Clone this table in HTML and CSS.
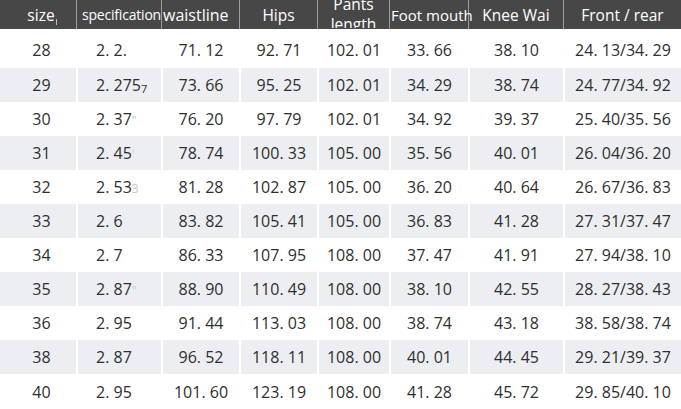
FILE: index.html
```html
<!DOCTYPE html>
<html lang="en">
<head>
<meta charset="utf-8">
<title>Size chart</title>
<link rel="stylesheet" href="styles.css">
</head>
<body>
<table class="chart">
  <colgroup>
    <col class="c-size"><col class="c-spec"><col class="c-waist"><col class="c-hips">
    <col class="c-pants"><col class="c-foot"><col class="c-knee"><col class="c-front">
  </colgroup>
  <thead>
    <tr>
      <th class="h-size">size<span class="tick"></span></th>
      <th class="h-spec">specification</th>
      <th class="h-waist">waistline</th>
      <th>Hips</th>
      <th class="h-pants"><div class="wrap">Pants<br>length</div></th>
      <th class="h-foot">Foot mouth</th>
      <th>Knee Wai</th>
      <th>Front / rear</th>
    </tr>
  </thead>
  <tbody>
    <tr class="first"><td class="size">28</td><td class="spec">2. 2.</td><td>71. 12</td><td>92. 71</td><td>102. 01</td><td>33. 66</td><td>38. 10</td><td>24. 13/34. 29</td></tr>
    <tr class="alt"><td class="size">29</td><td class="spec">2. 275<span class="sub">7</span></td><td>73. 66</td><td>95. 25</td><td>102. 01</td><td>34. 29</td><td>38. 74</td><td>24. 77/34. 92</td></tr>
    <tr><td class="size">30</td><td class="spec">2. 37<span class="faint">"</span></td><td>76. 20</td><td>97. 79</td><td>102. 01</td><td>34. 92</td><td>39. 37</td><td>25. 40/35. 56</td></tr>
    <tr class="alt"><td class="size">31</td><td class="spec">2. 45<span class="faint">'</span></td><td>78. 74</td><td>100. 33</td><td>105. 00</td><td>35. 56</td><td>40. 01</td><td>26. 04/36. 20</td></tr>
    <tr><td class="size">32</td><td class="spec">2. 53<span class="faint">3</span></td><td>81. 28</td><td>102. 87</td><td>105. 00</td><td>36. 20</td><td>40. 64</td><td>26. 67/36. 83</td></tr>
    <tr class="alt"><td class="size">33</td><td class="spec">2. 6</td><td>83. 82</td><td>105. 41</td><td>105. 00</td><td>36. 83</td><td>41. 28</td><td>27. 31/37. 47</td></tr>
    <tr><td class="size">34</td><td class="spec">2. 7</td><td>86. 33</td><td>107. 95</td><td>108. 00</td><td>37. 47</td><td>41. 91</td><td>27. 94/38. 10</td></tr>
    <tr class="alt"><td class="size">35</td><td class="spec">2. 87<span class="faint">"</span></td><td>88. 90</td><td>110. 49</td><td>108. 00</td><td>38. 10</td><td>42. 55</td><td>28. 27/38. 43</td></tr>
    <tr><td class="size">36</td><td class="spec">2. 95</td><td>91. 44</td><td>113. 03</td><td>108. 00</td><td>38. 74</td><td>43. 18</td><td>38. 58/38. 74</td></tr>
    <tr class="alt"><td class="size">38</td><td class="spec">2. 87</td><td>96. 52</td><td>118. 11</td><td>108. 00</td><td>40. 01</td><td>44. 45</td><td>29. 21/39. 37</td></tr>
    <tr class="last"><td class="size">40</td><td class="spec">2. 95</td><td>101. 60</td><td>123. 19</td><td>108. 00</td><td>41. 28</td><td>45. 72</td><td>29. 85/40. 10</td></tr>
  </tbody>
</table>
</body>
</html>
```
FILE: styles.css
```css
html, body {
  margin: 0;
  padding: 0;
  background: #ffffff;
}

.chart {
  width: 681px;
  table-layout: fixed;
  border-collapse: separate;
  border-spacing: 0;
  font-family: "Open Sans", "Noto Sans", "Noto Sans CJK SC", sans-serif;
}

.c-size { width: 76px; }
.c-spec { width: 85px; }
.c-waist { width: 78px; }
.c-hips { width: 78px; }
.c-pants { width: 72px; }
.c-foot { width: 79px; }
.c-knee { width: 95px; }
.c-front { width: 118px; }

.chart th {
  height: 29px;
  padding: 0;
  background: #474747;
  color: #ffffff;
  font-weight: normal;
  font-size: 15.5px;
  line-height: 20px;
  text-align: center;
  white-space: nowrap;
  border-left: 1px solid #9c9c9c;
  box-sizing: border-box;
}

.chart th:first-child {
  border-left: none;
}

.chart .h-size {
  padding-left: 8px;
}

.tick {
  display: inline-block;
  width: 1px;
  height: 6px;
  margin-left: 1px;
  background: #bdbdbd;
  vertical-align: -4px;
}

.chart .h-spec {
  text-align: left;
  padding-left: 5px;
  font-size: 14px;
  letter-spacing: -0.2px;
  position: relative;
  z-index: 1;
}

.chart .h-waist {
  text-align: left;
  padding-left: 1px;
  font-size: 16px;
}

.chart .h-pants {
  overflow: hidden;
}

.wrap {
  height: 29px;
  overflow: hidden;
  display: flex;
  flex-direction: column;
  justify-content: center;
  line-height: 20px;
  margin-top: -2px;
}

.chart .h-foot {
  text-align: left;
  padding-left: 1px;
  font-size: 15px;
}

.chart td {
  height: 34px;
  padding: 0;
  color: #2e2e2e;
  font-size: 16px;
  text-align: center;
  white-space: nowrap;
  border-left: 2px solid #ffffff;
  box-sizing: border-box;
}

.chart td:first-child {
  border-left: none;
}

.chart tr.first td {
  height: 39px;
  padding-top: 3px;
}

.chart tr.last td {
  height: 35px;
}

.chart tr.alt td {
  background: #eceef2;
}

.chart td.size {
  padding-left: 7px;
}

.chart td.spec {
  text-align: left;
  padding-left: 18px;
}

.sub {
  font-size: 11px;
  vertical-align: -2px;
}

.faint {
  color: #c8c8c8;
  font-size: 12px;
}
```
